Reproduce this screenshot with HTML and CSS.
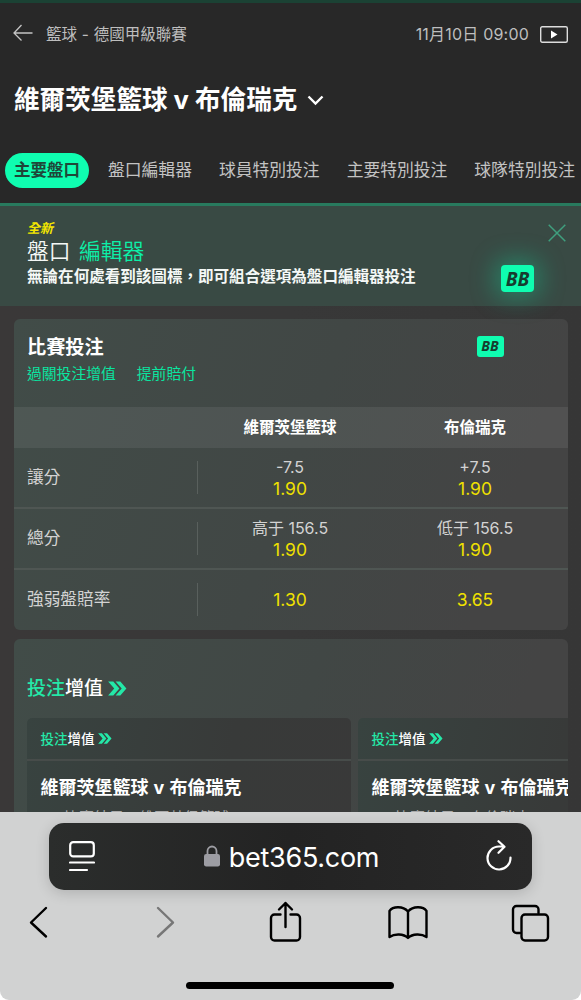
FILE: index.html
```html
<!DOCTYPE html>
<html lang="zh-Hant">
<head>
<meta charset="utf-8">
<meta name="viewport" content="width=device-width, initial-scale=1">
<title>bet365</title>
<link rel="stylesheet" href="styles.css">
</head>
<body>
<svg width="0" height="0" class="defs">
  <symbol id="boost" viewBox="0 0 20 16"><path d="M0 .5h5.500L12 8l-6.500 7.500H0L6.500 8z"/><path d="M8 .5h5L19.500 8 13 15.500H8L14.500 8z"/></symbol>
</svg>
<div class="phone">
  <main class="page">
    <header class="head">
      <div class="crumbs">
        <svg class="back" viewBox="0 0 20 18"><path d="M19.500 9H1M8.500 1 1 9l7.500 7.500"/></svg>
        <span class="league">籃球 - 德國甲級聯賽</span>
        <span class="time">11月10日 09:00</span>
        <svg class="video" viewBox="0 0 28 17"><rect x=".7" y=".7" width="26.600" height="15.600" rx="1.500"/><path d="M11 4.500v8l6.500-4z"/></svg>
      </div>
      <h1 class="title"><span>維爾茨堡籃球 v 布倫瑞克</span><svg class="chev" viewBox="0 0 17 11"><path d="M1.500 1.500l7 7 7-7"/></svg></h1>
      <nav class="tabs">
        <a class="tab on">主要盤口</a><a class="tab">盤口編輯器</a><a class="tab">球員特別投注</a><a class="tab">主要特別投注</a><a class="tab">球隊特別投注</a>
      </nav>
    </header>
    <section class="banner">
      <div class="new">全新</div>
      <div class="builder">盤口 <b>編輯器</b></div>
      <div class="desc">無論在何處看到該圖標，即可組合選項為盤口編輯器投注</div>
      <svg class="close" viewBox="0 0 18 18"><path d="M.7.7l16.600 16.600M17.300.7.7 17.300"/></svg>
      <span class="bb big">BB</span>
    </section>
    <section class="card market">
      <div class="mhead">
        <div>
          <h2>比賽投注</h2>
          <div class="promos"><span>過關投注增值</span><span>提前賠付</span></div>
        </div>
        <span class="bb small">BB</span>
      </div>
      <div class="row cols"><span></span><span>維爾茨堡籃球</span><span>布倫瑞克</span></div>
      <div class="row"><span class="label">讓分</span><span class="odd">-7.5<b>1.90</b></span><span class="odd">+7.5<b>1.90</b></span></div>
      <div class="row"><span class="label">總分</span><span class="odd">高于 156.5<b>1.90</b></span><span class="odd">低于 156.5<b>1.90</b></span></div>
      <div class="row"><span class="label">強弱盤賠率</span><span class="odd"><b>1.30</b></span><span class="odd"><b>3.65</b></span></div>
    </section>
    <section class="card boosts">
      <h2 class="boost"><i>投注</i>增值<svg><use href="#boost"/></svg></h2>
      <div class="strip">
        <article class="bet">
          <div class="boost"><i>投注</i>增值<svg><use href="#boost"/></svg></div>
          <h3>維爾茨堡籃球 v 布倫瑞克</h3>
          <p>比賽結果 - 維爾茨堡籃球</p>
        </article>
        <article class="bet">
          <div class="boost"><i>投注</i>增值<svg><use href="#boost"/></svg></div>
          <h3>維爾茨堡籃球 v 布倫瑞克</h3>
          <p>比賽結果 - 布倫瑞克</p>
        </article>
      </div>
    </section>
  </main>
  <footer class="browser">
    <div class="address">
      <svg class="reader" viewBox="0 0 26 31"><rect x="1.200" y="1.200" width="23.600" height="14.200" rx="3"/><path d="M1 21.500h24M1 29h17"/></svg>
      <div class="url"><svg class="lock" viewBox="0 0 16 22"><path class="shackle" d="M3.500 10V6a4.500 4.500 0 0 1 9 0v4"/><rect y="9" width="16" height="12.500" rx="2.200"/></svg><span>bet365.com</span></div>
      <svg class="reload" viewBox="0 0 26 31"><path d="M24.500 17.500A11.500 11.500 0 1 1 13 6.500h5M12.500 1.200l6 5.600-6 6"/></svg>
    </div>
    <div class="tools">
      <svg viewBox="0 0 40 42"><path d="M26 7 11 21.500 26 35.500"/></svg>
      <svg class="dim" viewBox="0 0 40 42"><path d="M15 7l15 14.500L15 35.500"/></svg>
      <svg viewBox="0 0 40 42"><path d="M15.500 13.500H9.500a3.500 3.500 0 0 0-3.500 3.500v19a3.500 3.500 0 0 0 3.500 3.500h22A3.500 3.500 0 0 0 35 36V17a3.500 3.500 0 0 0-3.500-3.500H25.500M20.500 26V2M14 8.500 20.500 2 27 8.500"/></svg>
      <svg viewBox="0 0 40 42"><path d="M20 10.500C15 5 5 5 1.500 10v26c5-3.500 14-3.500 18.500 1 4.500-4.500 13.500-4.500 18.500-1V10C35 5 25 5 20 10.500zM20 10.500v26"/></svg>
      <svg viewBox="0 0 40 42"><path d="M10 32H6.500a3.500 3.500 0 0 1-3.500-3.500V8.500A3.500 3.500 0 0 1 6.500 5H25a3.500 3.500 0 0 1 3.500 3.500V12"/><rect x="11.500" y="13.500" width="26.500" height="26" rx="3.500"/></svg>
    </div>
    <div class="home"></div>
  </footer>
</div>
</body>
</html>
```
FILE: styles.css
```css
* { box-sizing: border-box; }
body { margin: 0; background: #fff; font-family: Inter, "Noto Sans CJK TC", sans-serif; }
h1, h2, h3, p { margin: 0; }
svg { fill: none; flex: none; }
.defs { position: absolute; }
.phone { width: 581px; height: 1000px; display: flex; flex-direction: column; overflow: hidden; border-radius: 0 0 9px 9px; }
.page { height: 812px; flex: none; overflow: hidden; background: linear-gradient(90deg, #3a3838, #383838 50%, #363636); }

.head { height: 203px; background: #282828; border-top: 3px solid #1b4234; }
.crumbs { height: 62px; padding: 0 13px; display: flex; align-items: center; color: #bebebe; font-size: 15.5px; line-height: 24px; }
.back { width: 20px; height: 18px; stroke: #c4c4c4; stroke-width: 1.300; margin: 0 13px 3px 0; }
.league { flex: 1; font-size: 15.5px; word-spacing: .5px; padding-top: 1px; }
.time { font-size: 16px; margin-right: 11px; letter-spacing: .2px; }
.video { width: 28px; height: 17px; stroke: #ddd; stroke-width: 1.400; }
.video path { fill: #fff; stroke: none; }
.title { height: 68px; padding: 2px 0 0 14px; display: flex; align-items: center; color: #fff; font-size: 25.6px; line-height: 36px; font-weight: 700; white-space: nowrap; }
.chev { width: 17px; height: 11px; margin-left: 10px; stroke: #fff; stroke-width: 2.400; }
.tabs { display: flex; padding: 20px 0 0 5px; gap: 10px; white-space: nowrap; overflow: hidden; }
.tab { flex: none; height: 35px; line-height: 34px; padding: 0 8.500px; font-size: 16.8px; color: #c3c3c3; }
.on { width: 84px; padding: 0; text-align: center; margin-right: .5px; border-radius: 18px; background: #0ffdb0; color: #1f4638; font-weight: 700; font-size: 16.5px; }

.banner { position: relative; height: 103px; padding: 14px 27px 0; border-top: 3px solid #287a5e; background: #394a44; color: #f4f8f6; }
.new { height: 17px; line-height: 16px; font-size: 13px; font-style: italic; font-weight: 700; color: #f3e600; }
.builder { height: 28px; line-height: 28px; font-size: 21.8px; font-weight: 350; word-spacing: 2.2px; }
.builder b { font-weight: 350; color: #0cf0a8; }
.desc { height: 24px; line-height: 24px; font-size: 15.55px; font-weight: 700; white-space: nowrap; }
.close { position: absolute; right: 15px; top: 18px; width: 18px; height: 18px; stroke: #3f9f7e; stroke-width: 1.500; }
.bb { display: flex; align-items: center; justify-content: center; border-radius: 3px; background: #0ffdb0; color: #163c2f; font-family: "Open Sans", sans-serif; font-weight: 700; font-style: italic; }
.big { position: absolute; left: 501px; top: 59px; width: 33px; height: 27px; border-radius: 4px; font-size: 19px; box-shadow: 0 0 24px 6px rgba(20, 200, 145, .42); }
.small { width: 27px; height: 21px; font-size: 14px; padding-bottom: 2px; margin: 17px 64px 0 0; }

.card { margin: 0 13.500px; border-radius: 6px; overflow: hidden; }
.market { margin-top: 13px; height: 311px; background: linear-gradient(110deg, #414c48, #414745 50%, #444 85%); }
.mhead { height: 88px; padding-left: 13.500px; display: flex; justify-content: space-between; }
h2 { font-size: 19.2px; line-height: 26px; color: #fff; }
.mhead h2 { margin-top: 15px; }
.promos { display: flex; gap: 21px; margin-top: 2px; font-size: 14.8px; line-height: 24px; color: #0ae5a0; }
.row { display: grid; grid-template-columns: 184px 185px 185px; height: 61px; align-items: center; text-align: center; color: #d3d3d3; font-size: 16px; border-top: 2px solid #4f5653; }
.cols { height: 41px; padding-bottom: 3px; border: 0; background: rgba(255, 255, 255, .07); color: #fff; font-size: 15.5px; font-weight: 700; }
.cols + .row { border: 0; height: 59px; }
.label { height: 33px; line-height: 33px; padding: 0 0 0 13.500px; text-align: left; font-size: 16.7px; border-right: 1px solid #59605d; }
.odd { line-height: 22px; font-size: 16px; }
.odd b { display: block; font-weight: 400; font-size: 17.5px; color: #f0e100; }

.boosts { margin-top: 9px; height: 200px; padding: 36px 0 0 13.500px; background: linear-gradient(110deg, #414c48, #414745 50%, #444 85%); }
.boost { display: flex; align-items: center; color: #fff; font-weight: 500; }
.boost i { font-style: normal; color: #24e8a8; }
.boost svg { width: 19px; height: 15px; margin-left: 5px; margin-bottom: 1px; fill: #24e8a8; }
h2.boost { font-size: 19px; height: 28px; }
.strip { display: flex; gap: 7px; margin-top: 15px; }
.bet { flex: none; width: 324px; height: 150px; border-radius: 5px; background: linear-gradient(100deg, #384340, #383a39 60%, #393939); }
.bet .boost { height: 43px; padding: 0 0 2px 13.500px; font-size: 13.5px; border-bottom: 2px solid #474c4a; }
.bet .boost svg { width: 14px; height: 11px; margin: 1px 0 0 3px; }
h3 { margin: 14px 0 0 13.500px; font-size: 18px; line-height: 26px; color: #fff; white-space: nowrap; word-spacing: .8px; }
.bet p { margin: 7px 0 0 37px; font-size: 15px; line-height: 20px; color: #aaa; white-space: nowrap; }

.browser { flex: 1; padding: 11px 0 0 49px; background: #d1d2d2; }
.address { width: 483px; height: 67px; display: flex; align-items: center; justify-content: space-between; padding: 0 20px; border-radius: 15px; background: linear-gradient(90deg, #2b2d2c, #232323 50%, #292929); box-shadow: 0 3px 14px rgba(0, 0, 0, .16); stroke: #fff; }
.reader { width: 26px; height: 31px; stroke-width: 2.200; stroke-linecap: round; }
.reload { width: 26px; height: 31px; stroke-width: 2.200; stroke-linecap: round; stroke-linejoin: round; margin-bottom: 3px; }
.url { display: flex; align-items: center; gap: 9px; margin-left: 2px; padding-top: 1px; color: #fff; font-size: 27px; letter-spacing: -.3px; }
.url span { stroke: none; }
.lock { width: 16px; height: 22px; margin-bottom: 2px; fill: #9d9da3; stroke: none; }
.shackle { fill: none; stroke: #9d9da3; stroke-width: 1.800; }
.tools { display: flex; justify-content: space-between; margin: 11px 31px 0 -29px; stroke: #000; stroke-width: 2.400; stroke-linecap: round; stroke-linejoin: round; }
.tools svg { width: 40px; height: 42px; }
.dim { stroke: #777; }
.home { width: 208px; height: 7px; margin: 39px 0 0 137px; border-radius: 4px; background: #000; }
```
